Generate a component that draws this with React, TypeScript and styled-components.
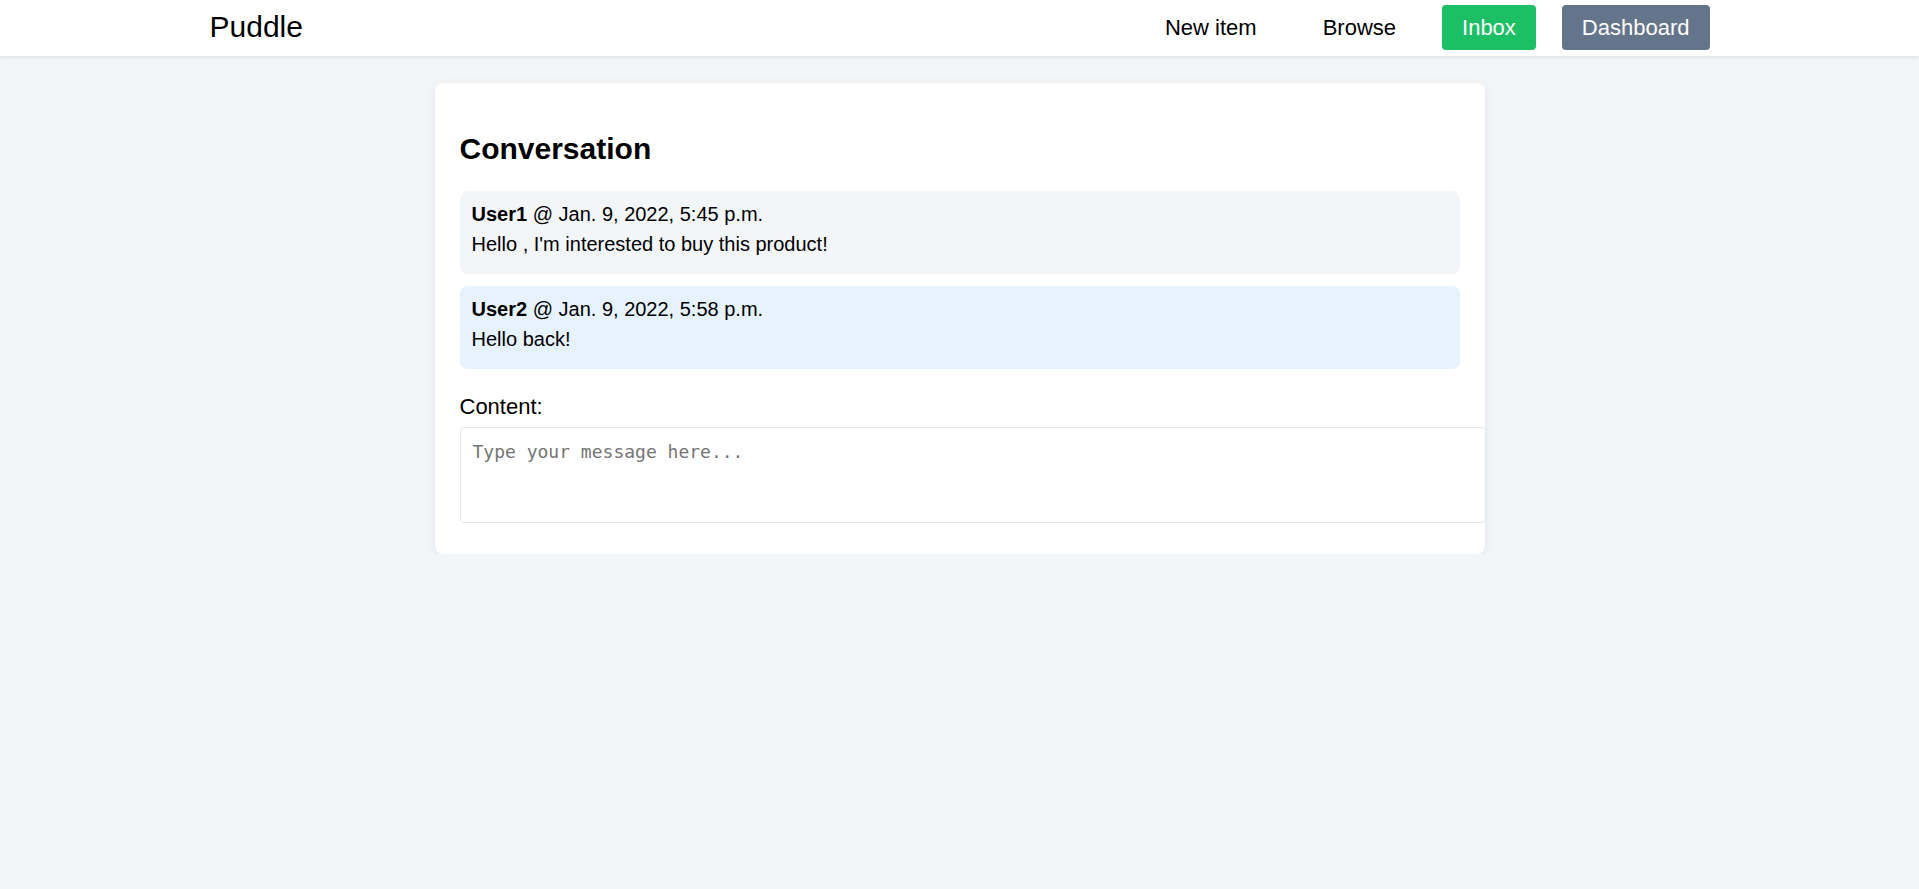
import React from "react";
import styled, { createGlobalStyle } from "styled-components";

const GlobalStyle = createGlobalStyle`
  html, body {
    margin: 0;
    padding: 0;
    background: #f3f6f9;
    font-family: "Liberation Sans", Arial, sans-serif;
    font-size: 20px;
    color: #000;
  }
  * { box-sizing: border-box; }
`;

const Header = styled.header`
  background: #fff;
  height: 56px;
  box-shadow: 0 2px 3px rgba(15, 23, 42, 0.08);
  position: relative;
  z-index: 1;
`;

const HeaderInner = styled.div`
  max-width: 1500px;
  height: 100%;
  margin: 0 auto;
  display: flex;
  align-items: center;
  justify-content: space-between;
`;

const Brand = styled.a`
  font-size: 30px;
  color: #000;
  text-decoration: none;
  padding-bottom: 2px;
`;

const Menu = styled.nav`
  display: flex;
  align-items: center;
  gap: 26px;
  align-self: flex-start;
  padding-top: 5px;
`;

const MenuLink = styled.a<{ $variant?: "plain" | "green" | "slate" }>`
  font-size: 22px;
  line-height: 25px;
  padding: 10px 20px;
  border-radius: 4px;
  text-decoration: none;
  color: ${(p) => (p.$variant && p.$variant !== "plain" ? "#fff" : "#000")};
  background: ${(p) =>
    p.$variant === "green" ? "#1dbf64" : p.$variant === "slate" ? "#64748b" : "transparent"};
`;

const Main = styled.main`
  padding-top: 27px;
`;

const Card = styled.section`
  width: 1050px;
  margin: 0 auto;
  background: #fff;
  border-radius: 8px;
  padding: 24px 25px 25px;
  box-shadow: 0 2px 10px rgba(15, 23, 42, 0.08);
`;

const Title = styled.h2`
  font-size: 30px;
  font-weight: bold;
  margin: 25px 0;
  line-height: normal;
`;

const Message = styled.div<{ $mine?: boolean }>`
  background: ${(p) => (p.$mine ? "#e6f2fd" : "#f3f6f9")};
  border-radius: 8px;
  padding: 8px 12px 15px;
  line-height: 30px;
  margin-bottom: 12px;
`;

const Author = styled.strong`
  font-weight: bold;
`;

const Form = styled.form`
  margin-top: 25px;
`;

const Label = styled.label`
  display: block;
  font-size: 22px;
  line-height: 25px;
  margin-bottom: 8px;
`;

const TextArea = styled.textarea`
  display: block;
  width: 1026px;
  height: 96px;
  padding: 13px 12px;
  border: 1px solid #e2e8f0;
  border-radius: 4px;
  font-family: "DejaVu Sans Mono", monospace;
  font-size: 18px;
  resize: none;
  margin-bottom: 6px;
  outline: none;
  &::placeholder {
    color: #757575;
  }
`;

const messages = [
  { user: "User1", time: "Jan. 9, 2022, 5:45 p.m.", text: "Hello , I'm interested to buy this product!", mine: false },
  { user: "User2", time: "Jan. 9, 2022, 5:58 p.m.", text: "Hello back!", mine: true },
];

export default function App() {
  return (
    <>
      <GlobalStyle />
      <Header>
        <HeaderInner>
          <Brand href="#">Puddle</Brand>
          <Menu>
            <MenuLink href="#">New item</MenuLink>
            <MenuLink href="#">Browse</MenuLink>
            <MenuLink href="#" $variant="green">Inbox</MenuLink>
            <MenuLink href="#" $variant="slate">Dashboard</MenuLink>
          </Menu>
        </HeaderInner>
      </Header>
      <Main>
        <Card>
          <Title>Conversation</Title>
          {messages.map((m) => (
            <Message key={m.user} $mine={m.mine}>
              <div>
                <Author>{m.user}</Author> @ {m.time}
              </div>
              <div>{m.text}</div>
            </Message>
          ))}
          <Form onSubmit={(e) => e.preventDefault()}>
            <Label htmlFor="content">Content:</Label>
            <TextArea id="content" placeholder="Type your message here..." />
          </Form>
        </Card>
      </Main>
    </>
  );
}
